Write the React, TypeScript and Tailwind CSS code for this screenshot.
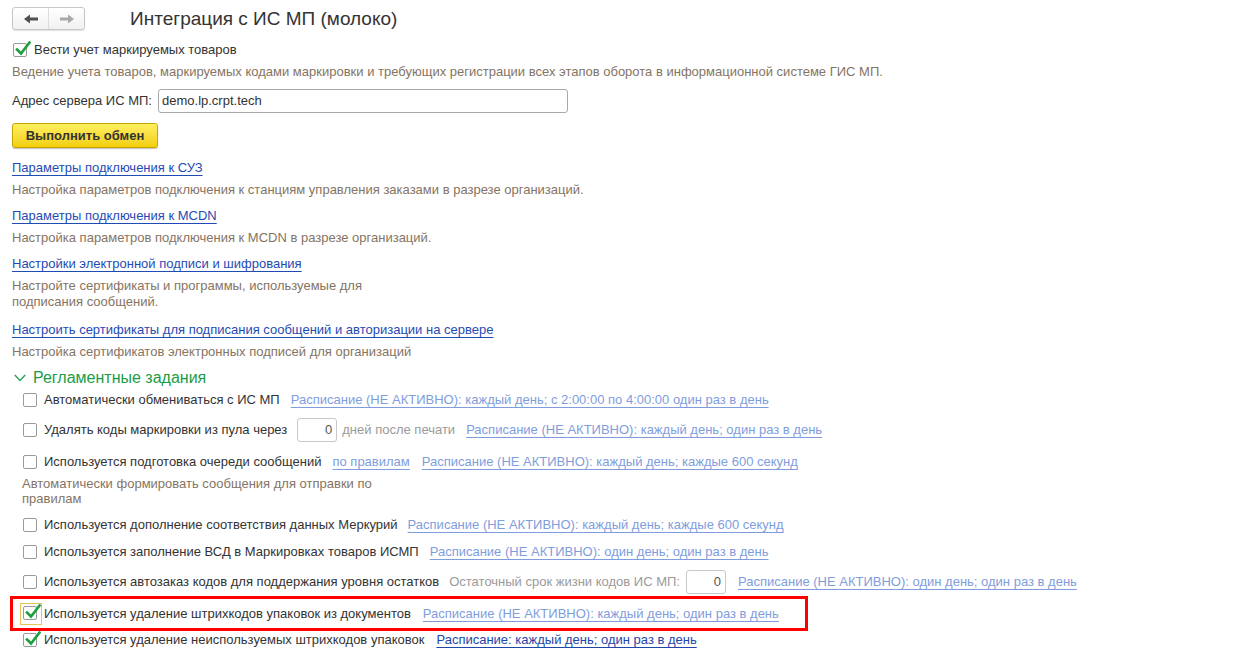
import React from "react";

const Check = ({ checked, focus }: { checked?: boolean; focus?: boolean }) => {
  const box = (
    <span className="relative inline-block w-[14px] h-[14px] border border-[#9a9a9a] rounded-[2px] bg-white shrink-0">
      {checked && (
        <svg className="absolute left-[1px] top-[-4px]" width="16" height="16" viewBox="0 0 16 16">
          <path d="M2 9.5 L6 13.5 L14.5 2.5" fill="none" stroke="#1aa03c" strokeWidth="2.6" strokeLinecap="square" />
        </svg>
      )}
    </span>
  );
  if (focus) {
    return (
      <span className="inline-flex w-[22px] h-[22px] border border-[#eac25a] pl-[2px] pt-[2px] shrink-0">{box}</span>
    );
  }
  return box;
};

const Sched = ({ children, dark }: { children: React.ReactNode; dark?: boolean }) => (
  <a className={`underline underline-offset-[3px] ${dark ? "text-[#1e45a8] decoration-[#1e45a8]" : "text-[#7f9ddd] decoration-[#7f9ddd]"}`}>{children}</a>
);

const Link = ({ children }: { children: React.ReactNode }) => (
  <a className="text-[#1f4bb4] underline underline-offset-[3px] decoration-[#1f4bb4] leading-[16px] h-[16px] block">{children}</a>
);

const Desc = ({ children, className = "" }: { children: React.ReactNode; className?: string }) => (
  <div className={`text-[#857463] leading-[16px] ${className}`}>{children}</div>
);

const SmallInput = () => (
  <span className="inline-flex items-center justify-end w-[40px] h-[24px] border border-[#c8c8c8] rounded-[3px] pr-[4px] text-[#555]">0</span>
);

export default function App() {
  return (
    <div
      className="w-[1243px] h-[663px] bg-white text-[13px] text-[#333] overflow-hidden"
      style={{ fontFamily: '"Liberation Sans", Arial, sans-serif' }}
    >
      <div className="pl-[12px] pt-[7px] flex flex-col">
        {/* header */}
        <div className="flex items-center h-[23px]">
          <div className="flex w-[73px] h-[23px] border border-[#c6c6c6] rounded-[3px] bg-gradient-to-b from-white to-[#f1f1f1] shadow-[0_1px_1px_rgba(0,0,0,0.12)]">
            <div className="w-[36px] flex items-center justify-center border-r border-[#dcdcdc]">
              <svg width="14" height="10" viewBox="0 0 14 10">
                <path d="M0 5 L6 0.5 L6 3.5 L14 3.5 L14 6.5 L6 6.5 L6 9.5 Z" fill="#505050" />
              </svg>
            </div>
            <div className="flex-1 flex items-center justify-center">
              <svg width="14" height="10" viewBox="0 0 14 10">
                <path d="M14 5 L8 0.5 L8 3.5 L0 3.5 L0 6.5 L8 6.5 L8 9.5 Z" fill="#a8a8a8" />
              </svg>
            </div>
          </div>
          <div className="ml-[45px] text-[19px] text-[#333] leading-[24px] mt-[1px]">Интеграция с ИС МП (молоко)</div>
        </div>

        <div className="flex items-center h-[18px] mt-[11px] pl-[1px]">
          <Check checked />
          <span className="ml-[7px]">Вести учет маркируемых товаров</span>
        </div>
        <Desc className="mt-[5px]">
          Ведение учета товаров, маркируемых кодами маркировки и требующих регистрации всех этапов оборота в информационной системе ГИС МП.
        </Desc>

        <div className="flex items-center h-[24px] mt-[9px]">
          <span className="w-[146px]">Адрес сервера ИС МП:</span>
          <div className="w-[410px] h-[24px] border border-[#a9a9a9] rounded-[3px] flex items-center pl-[3px]">demo.lp.crpt.tech</div>
        </div>

        <div className="mt-[10px]">
          <button className="w-[146px] h-[25px] rounded-[3px] border border-[#c8a600] bg-gradient-to-b from-[#ffef5c] to-[#f2cf00] font-bold text-[#333] shadow-[0_1px_1px_rgba(0,0,0,0.25)]">
            Выполнить обмен
          </button>
        </div>

        <div className="mt-[12px]"><Link>Параметры подключения к СУЗ</Link></div>
        <Desc className="mt-[6px]">Настройка параметров подключения к станциям управления заказами в разрезе организаций.</Desc>

        <div className="mt-[10px]"><Link>Параметры подключения к MCDN</Link></div>
        <Desc className="mt-[6px]">Настройка параметров подключения к MCDN в разрезе организаций.</Desc>

        <div className="mt-[10px]"><Link>Настройки электронной подписи и шифрования</Link></div>
        <Desc className="mt-[6px]">
          Настройте сертификаты и программы, используемые для
          <br />
          подписания сообщений.
        </Desc>

        <div className="mt-[12px]"><Link>Настроить сертификаты для подписания сообщений и авторизации на сервере</Link></div>
        <Desc className="mt-[6px]">Настройка сертификатов электронных подписей для организаций</Desc>

        <div className="flex items-center h-[20px] mt-[8px] pl-[2px]">
          <svg width="12" height="8" viewBox="0 0 12 8">
            <path d="M0.8 1 L6 6.5 L11.2 1" fill="none" stroke="#2aa052" strokeWidth="1.4" />
          </svg>
          <span className="ml-[7px] text-[16px] text-[#1a9d45]">Регламентные задания</span>
        </div>

        <div className="pl-[11px] flex flex-col">
          <div className="flex items-center h-[18px] mt-[3px]">
            <Check />
            <span className="ml-[7px] mr-[11px]">Автоматически обмениваться с ИС МП</span>
            <Sched>Расписание (НЕ АКТИВНО): каждый день; с 2:00:00 по 4:00:00 один раз в день</Sched>
          </div>

          <div className="flex items-center h-[24px] mt-[9px]">
            <Check />
            <span className="ml-[7px] mr-[10px]">Удалять коды маркировки из пула через</span>
            <SmallInput />
            <span className="ml-[5px] mr-[11px] text-[#9a9a9a]">дней после печати</span>
            <Sched>Расписание (НЕ АКТИВНО): каждый день; один раз в день</Sched>
          </div>

          <div className="flex items-center h-[18px] mt-[11px]">
            <Check />
            <span className="ml-[7px] mr-[11px]">Используется подготовка очереди сообщений</span>
            <Sched>по правилам</Sched>
            <span className="w-[12px]" />
            <Sched>Расписание (НЕ АКТИВНО): каждый день; каждые 600 секунд</Sched>
          </div>
          <div className="text-[#857463] leading-[15px] mt-[5px] -ml-[1px]">
            Автоматически формировать сообщения для отправки по
            <br />
            правилам
          </div>

          <div className="flex items-center h-[18px] mt-[10px]">
            <Check />
            <span className="ml-[7px] mr-[10px]">Используется дополнение соответствия данных Меркурий</span>
            <Sched>Расписание (НЕ АКТИВНО): каждый день; каждые 600 секунд</Sched>
          </div>

          <div className="flex items-center h-[18px] mt-[9px]">
            <Check />
            <span className="ml-[7px] mr-[11px]">Используется заполнение ВСД в Маркировках товаров ИСМП</span>
            <Sched>Расписание (НЕ АКТИВНО): один день; один раз в день</Sched>
          </div>

          <div className="flex items-center h-[24px] mt-[9px]">
            <Check />
            <span className="ml-[7px] mr-[10px]">Используется автозаказ кодов для поддержания уровня остатков</span>
            <span className="mr-[6px] text-[#9a9a9a]">Остаточный срок жизни кодов ИС МП:</span>
            <SmallInput />
            <span className="w-[12px]" />
            <Sched>Расписание (НЕ АКТИВНО): один день; один раз в день</Sched>
          </div>

          <div className="flex items-center h-[35px] w-[798px] mt-[2px] -ml-[13px] border-[3px] border-[#ff0000] pl-[7px]">
            <Check checked focus />
            <span className="ml-[2px] mr-[12px]">Используется удаление штрихкодов упаковок из документов</span>
            <Sched>Расписание (НЕ АКТИВНО): каждый день; один раз в день</Sched>
          </div>

          <div className="flex items-center h-[18px]">
            <Check checked />
            <span className="ml-[7px] mr-[12px]">Используется удаление неиспользуемых штрихкодов упаковок</span>
            <Sched dark>Расписание: каждый день; один раз в день</Sched>
          </div>
        </div>
      </div>
    </div>
  );
}
